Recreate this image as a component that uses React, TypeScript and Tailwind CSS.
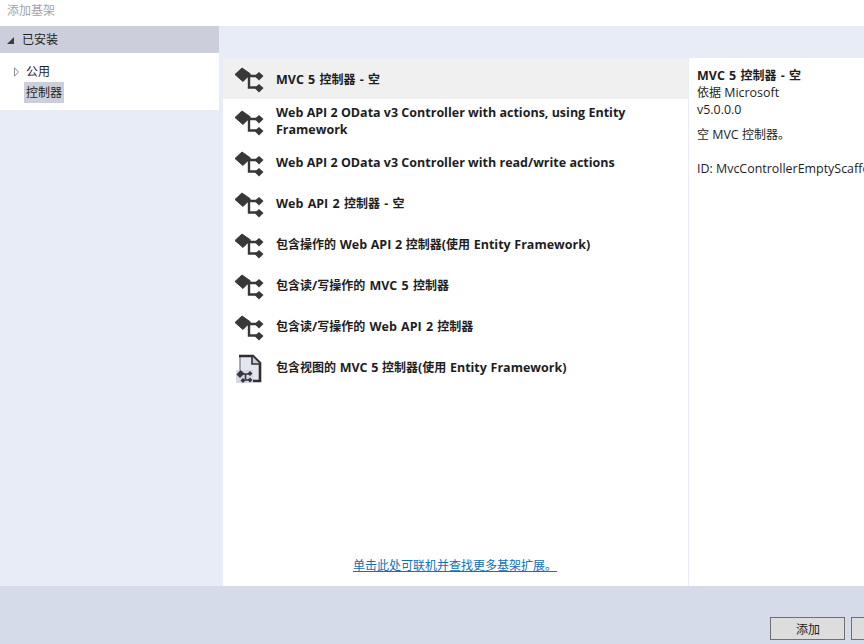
const font = { fontFamily: '"Open Sans", "Noto Sans CJK SC", sans-serif' }

// CJK runs sit at 12px, latin runs stay a little larger like the original UI font
const Mixed = ({ text }: { text: string }) => (
  <>
    {text.split(/([\u4e00-\u9fff。]+)/).map((part, i) =>
      i % 2 === 1 ? (
        <span key={i} className="text-[12px]">
          {part}
        </span>
      ) : (
        part
      )
    )}
  </>
)

const ControllerIcon = () => (
  <svg width="30" height="28" viewBox="0 0 30 28" className="shrink-0">
    <path d="M0 9.5 L7 3 L15.5 9 L8 16.5 Z" fill="#383838" stroke="#383838" strokeLinejoin="round" />
    <path d="M12 11 H23 M14 11 V22.5 H23" stroke="#383838" strokeWidth="2.4" fill="none" />
    <path d="M19.5 11 L24 7 L28.5 11 L24 15.5 Z" fill="#383838" />
    <path d="M19.5 23 L24 19 L28.5 23 L24 27.5 Z" fill="#383838" />
  </svg>
)

const ViewIcon = () => (
  <svg width="30" height="30" viewBox="0 0 30 30" className="shrink-0">
    <path d="M5 3 H18 L25 10 V28 H5 Z" fill="#e4e6ef" />
    <path d="M5 28 V3" stroke="#8f8f96" strokeWidth="1.5" />
    <path d="M4 3 H18 L25 10 V28 H12" stroke="#2f2f2f" strokeWidth="2.6" fill="none" />
    <path d="M17 3 V11 H25" fill="#c9ccd8" stroke="#2f2f2f" strokeWidth="1.6" />
    <rect x="1" y="17" width="17" height="13" fill="#d4d8e4" />
    <path d="M1.5 21.5 L5.5 17 L9.5 20.5 L5 25 Z" fill="#383838" />
    <path d="M8 21 H15 M10.5 21 V27 H15" stroke="#383838" strokeWidth="1.6" fill="none" />
    <path d="M12.5 20.5 L15 18 L17.5 20.5 L15 23 Z" fill="#383838" />
    <path d="M5.5 27.5 L8 25 L10.5 27.5 L8 30 Z" fill="#383838" />
    <path d="M12.5 27 L15 24.5 L17.5 27 L15 29.5 Z" fill="#383838" />
  </svg>
)

const items = [
  { text: "MVC 5 控制器 - 空", cls: "[word-spacing:1px] pt-[2px]" },
  { text: "Web API 2 OData v3 Controller with actions, using Entity Framework", cls: "-mt-[2px]" },
  { text: "Web API 2 OData v3 Controller with read/write actions", cls: "" },
  { text: "Web API 2 控制器 - 空", cls: "[word-spacing:1px]" },
  { text: "包含操作的 Web API 2 控制器(使用 Entity Framework)", cls: "[word-spacing:0.4px]" },
  { text: "包含读/写操作的 MVC 5 控制器", cls: "[word-spacing:1px]" },
  { text: "包含读/写操作的 Web API 2 控制器", cls: "[word-spacing:1px]" },
  { text: "包含视图的 MVC 5 控制器(使用 Entity Framework)", cls: "[word-spacing:0.4px]" },
]

export default function App() {
  return (
    <div className="w-[864px] h-[644px] flex flex-col overflow-hidden bg-white text-[#1e1e1e] text-[12px]" style={font}>
      <div className="h-[26px] shrink-0 px-[7px] pt-[2px] text-[#a2a4a5] leading-[17px]">添加基架</div>

      <div className="h-[560px] shrink-0 flex bg-[#e8ecf6]">
        <div className="w-[219px] shrink-0">
          <div className="h-[27px] bg-[#cccedb] flex items-center pl-[7px] pt-[1px] gap-[8px]">
            <span className="w-0 h-0 border-l-[7px] border-l-transparent border-b-[7px] border-b-[#3d3d3d]" />
            <span>已安装</span>
          </div>
          <div className="h-[57px] bg-white pt-[8px]">
            <div className="flex items-center h-[21px] pl-[14px] gap-[7px] pt-[1px]">
              <svg width="5" height="10" viewBox="0 0 5 10" className="shrink-0">
                <path d="M0.5 0.8 L4.5 5 L0.5 9.2 Z" fill="#ffffff" stroke="#8a8a8a" />
              </svg>
              <span>公用</span>
            </div>
            <div className="h-[21px] ml-[24px] w-[40px] pl-[2px] bg-[#cccedb] leading-[21px]">控制器</div>
          </div>
        </div>

        <div className="ml-[4px] mt-[32px] w-[465px] shrink-0 bg-white flex flex-col">
          <ul className="flex-1 text-[12.5px]">
            {items.map((item, i) => (
              <li
                key={item.text}
                className={
                  "h-[41px] flex items-center pl-[12px] pr-[40px] gap-[11px] font-bold leading-[17px] " +
                  (i === 0 ? "bg-[#f0f0f0] h-[39px] mb-[2px]" : "")
                }
              >
                {i === 7 ? <ViewIcon /> : <ControllerIcon />}
                <span className={item.cls}>
                  <Mixed text={item.text} />
                </span>
              </li>
            ))}
          </ul>
          <div className="h-[30px] text-center pr-[1px] pt-[1px]">
            <a className="text-[#0e70c0] underline leading-[18px]">单击此处可联机并查找更多基架扩展。</a>
          </div>
        </div>

        <div className="ml-[1px] mt-[32px] flex-1 bg-white pl-[8px] pt-[9px] leading-[17px] whitespace-nowrap overflow-hidden text-[12.45px]">
          <div className="font-bold text-[12.5px] [word-spacing:1px]">
            <Mixed text="MVC 5 控制器 - 空" />
          </div>
          <div>
            <Mixed text="依据 Microsoft" />
          </div>
          <div>v5.0.0.0</div>
          <div className="mt-[8px]">
            <Mixed text="空 MVC 控制器。" />
          </div>
          <div className="mt-[17px]">ID: MvcControllerEmptyScaffolder</div>
        </div>
      </div>

      <div className="flex-1 bg-[#d6dbe9] flex justify-start pl-[770px] pt-[31px] gap-[6px]">
        <button className="w-[75px] h-[23px] shrink-0 bg-[#dddddd] border border-[#707070] text-[#1e1e1e] pt-[2px] pl-[1px]">添加</button>
        <button className="w-[75px] h-[23px] shrink-0 bg-[#dddddd] border border-[#707070]" />
      </div>
    </div>
  )
}
